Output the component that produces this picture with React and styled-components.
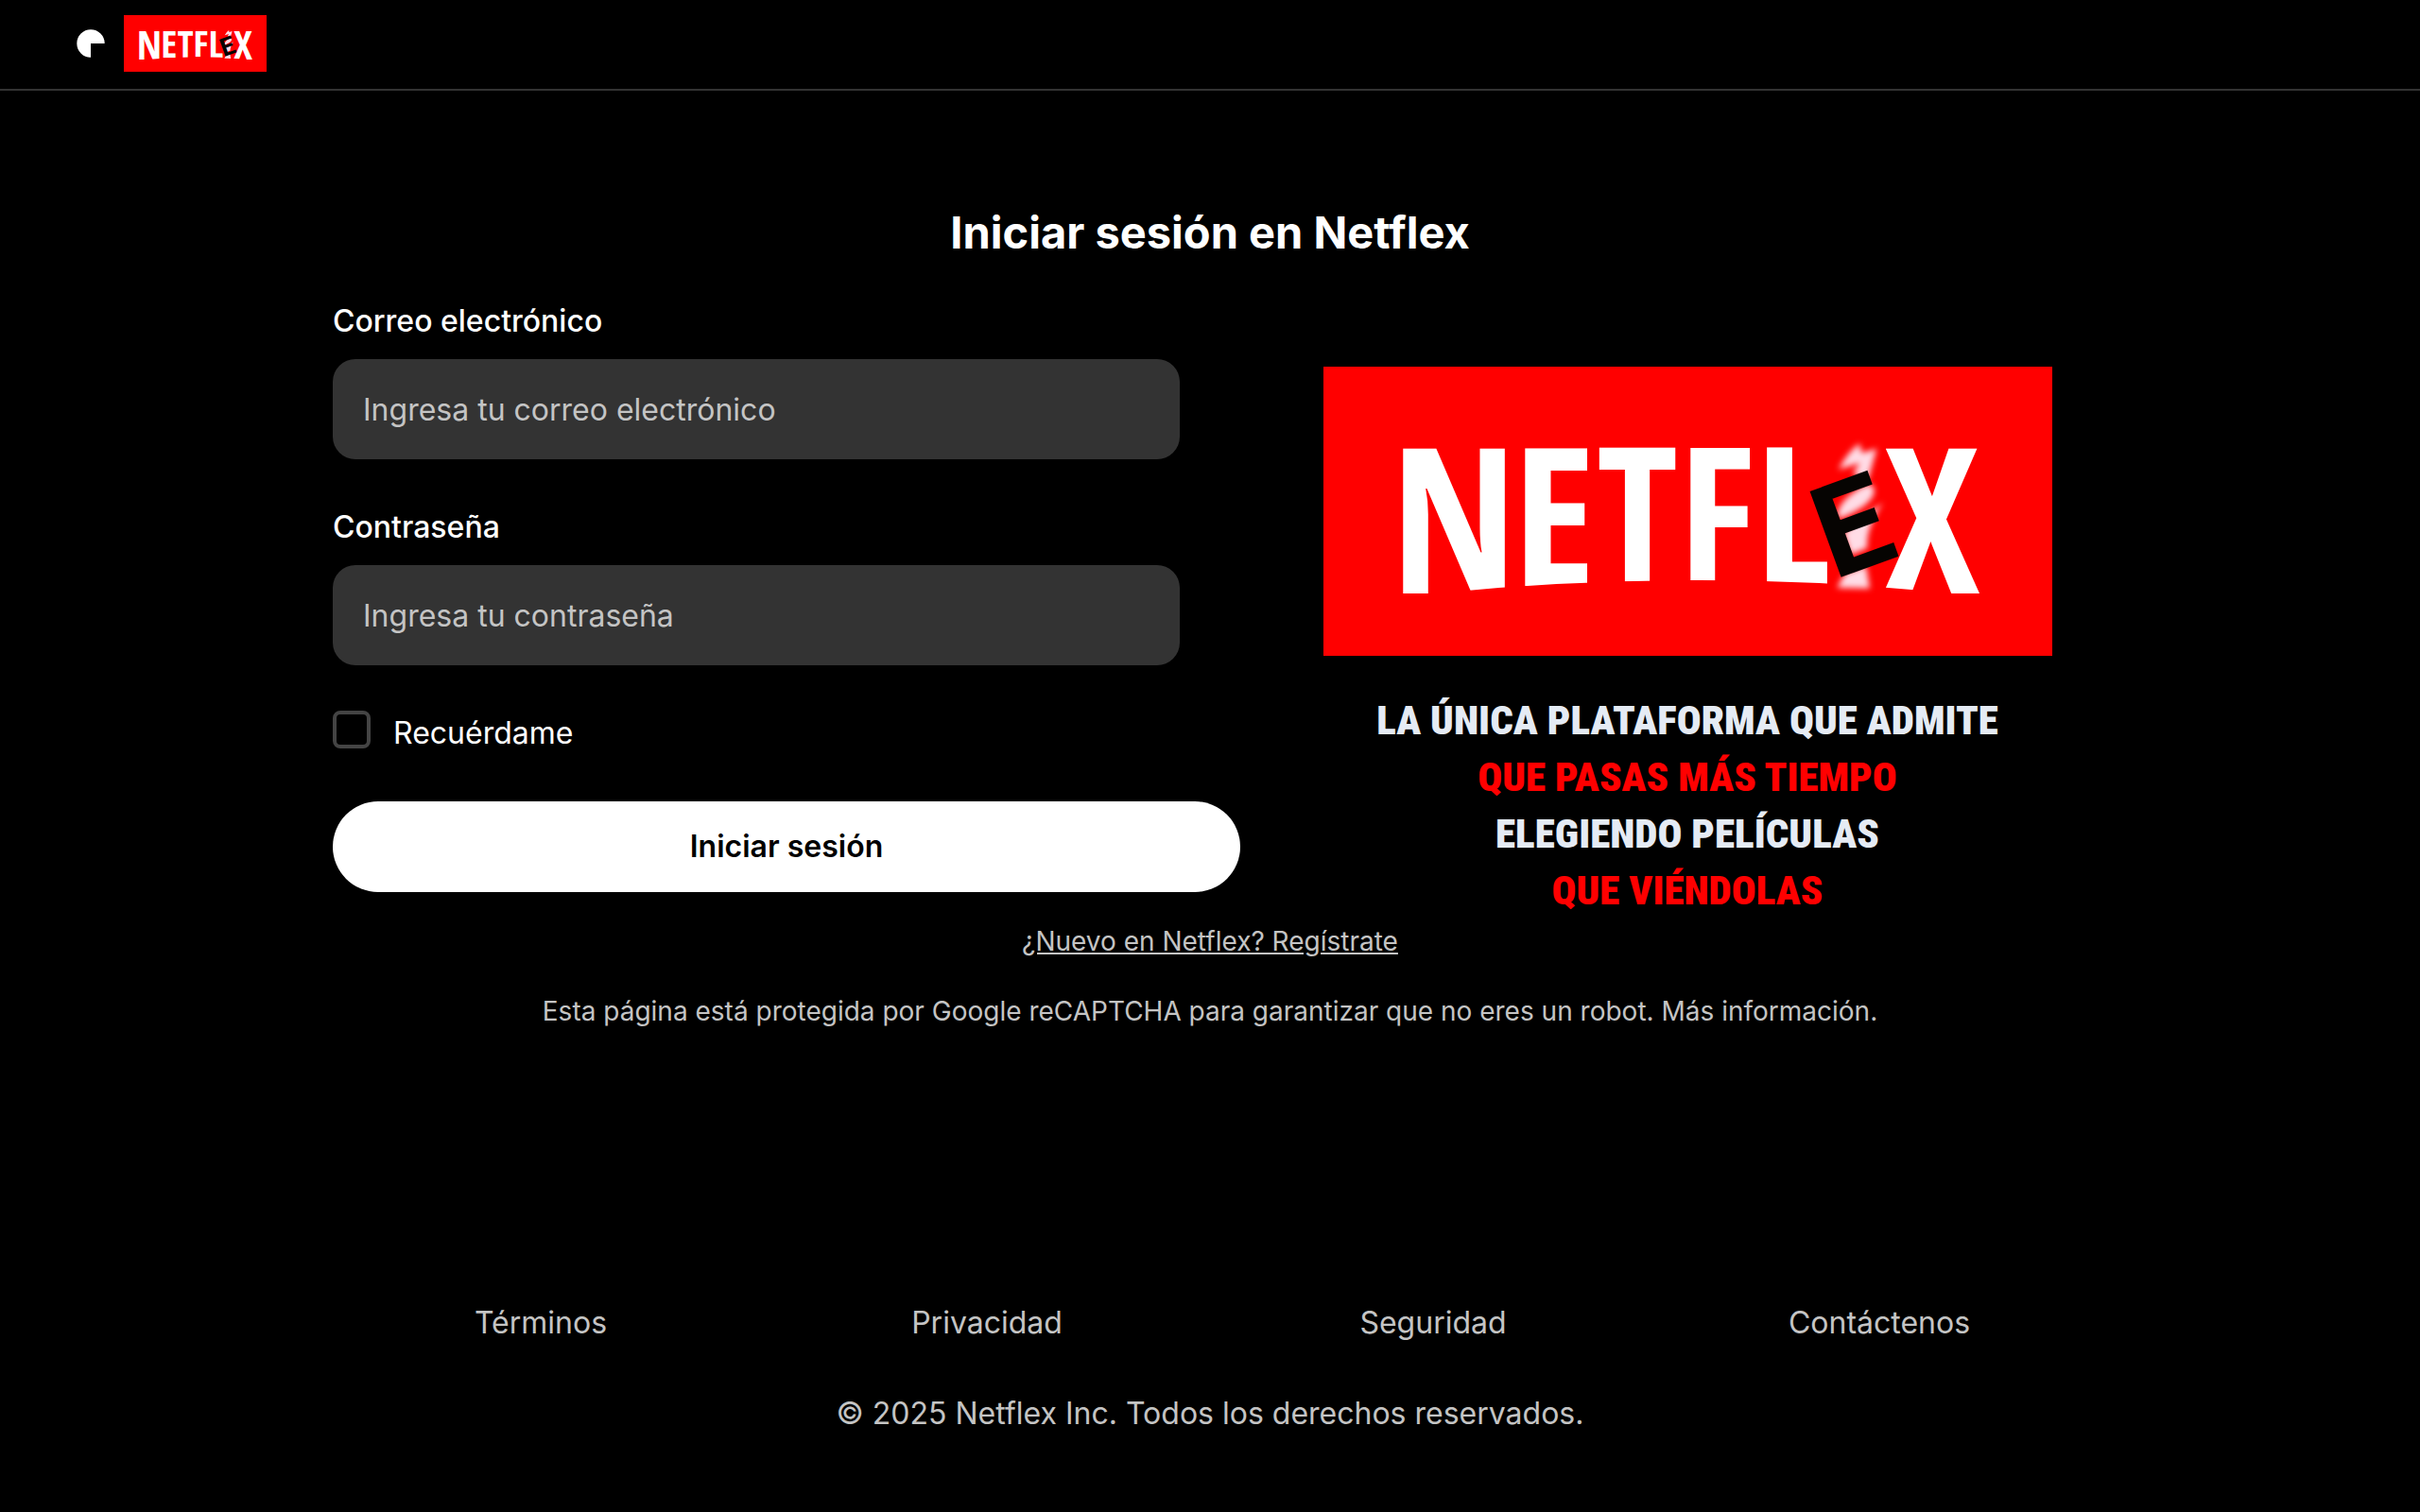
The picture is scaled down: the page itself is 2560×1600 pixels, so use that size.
import React, { useId } from "react";
import styled, { createGlobalStyle } from "styled-components";

const GlobalStyle = createGlobalStyle`
  *, *::before, *::after { box-sizing: border-box; }
  body {
    margin: 0;
    background: #000;
    color: #fff;
    font-family: Inter, "Open Sans", sans-serif;
    font-size: 32px;
    line-height: 48px;
  }
`;

const Page = styled.div`
  min-height: 100vh;
  display: flex;
  flex-direction: column;
`;

const Header = styled.header`
  display: flex;
  align-items: center;
  gap: 20px;
  padding: 16px 81px 18px;
  border-bottom: 2px solid #333;
`;

const HomeLink = styled.a`
  display: flex;
  width: ${(p) => p.$width}px;
`;

const Drawing = styled.svg`
  display: block;
  width: 100%;
  height: auto;
`;

const Main = styled.main`
  flex: 1;
  width: 100%;
  max-width: 1856px;
  margin: 0 auto;
  padding-top: 120px;
  display: flex;
  flex-direction: column;
  align-items: center;
`;

const Title = styled.h1`
  margin: 0 0 40px;
  font-size: 47px;
  line-height: 60px;
  font-weight: 700;
`;

const Columns = styled.div`
  width: 100%;
  display: grid;
  grid-template-columns: minmax(0, 960px) minmax(0, 1fr);
  column-gap: 50px;
`;

const Form = styled.form`
  display: flex;
  flex-direction: column;
  gap: 48px;
`;

const Field = styled.div`
  display: flex;
  flex-direction: column;
  gap: 16px;
  padding-right: 64px;
`;

const FieldLabel = styled.label`
  font-weight: 500;
`;

const TextInput = styled.input`
  width: 100%;
  height: 106px;
  padding: 2px 32px 0;
  border: 0;
  border-radius: 24px;
  background: #333;
  color: #fff;
  font: inherit;
  &::placeholder {
    color: #c4c4c4;
    opacity: 1;
  }
`;

const RememberRow = styled.div`
  display: flex;
  align-items: flex-start;
  gap: 24px;
`;

const Checkbox = styled.input`
  appearance: none;
  width: 40px;
  height: 40px;
  margin: 0;
  border: 4px solid #444;
  border-radius: 8px;
  background: transparent;
  &:checked {
    background: #fff;
  }
`;

const SubmitButton = styled.button`
  height: 96px;
  border: 0;
  border-radius: 48px;
  background: #fff;
  color: #000;
  font: inherit;
  font-weight: 600;
`;

const Promo = styled.section`
  padding-top: 72px;
  display: flex;
  flex-direction: column;
  align-items: center;
  gap: 38px;
`;

const PromoBanner = styled.div`
  width: 100%;
  max-width: 771px;
`;

const Slogan = styled.p`
  margin: 0;
  text-align: center;
  font-family: "Roboto Condensed", "Open Sans Condensed", Roboto, sans-serif;
  font-size: 43px;
  line-height: 60px;
  font-weight: 900;
`;

const SloganLine = styled.span`
  display: block;
  color: ${(p) => (p.$accent ? "#f00" : "#e5ebf4")};
`;

const SmallPrint = styled.div`
  margin-top: 4px;
  display: flex;
  flex-direction: column;
  align-items: center;
  gap: 34px;
  color: #c4c4c4;
  font-size: 28px;
  line-height: 40px;
`;

const SignUpLink = styled.a`
  color: inherit;
`;

const Notice = styled.p`
  margin: 0;
`;

const Footer = styled.footer`
  width: 100%;
  max-width: 1888px;
  margin: 0 auto;
  padding-bottom: 80px;
  display: flex;
  flex-direction: column;
  gap: 48px;
  color: #c4c4c4;
  text-align: center;
`;

const FooterNav = styled.nav`
  display: grid;
  grid-template-columns: repeat(4, 1fr);
`;

const FooterLink = styled.a`
  color: inherit;
  text-decoration: none;
`;

const Copyright = styled.p`
  margin: 0;
`;

const LogoLetter = styled.text`
  fill: #fff;
  font-family: "Open Sans Condensed", "Roboto Condensed", sans-serif;
  font-weight: 700;
  text-anchor: middle;
`;

const StampedLetter = styled.text`
  fill: #060402;
  font-family: Roboto, sans-serif;
  font-size: 136px;
  font-weight: 700;
`;

/* Centre, baseline and size of each white letter; sizes grow towards both ends to form the arch. */
const LETTERS = [
  { char: "N", x: 138, y: 240, size: 215 },
  { char: "E", x: 244, y: 232, size: 204 },
  { char: "T", x: 332, y: 228, size: 198 },
  { char: "F", x: 416, y: 226, size: 196 },
  { char: "L", x: 497, y: 230, size: 201 },
  { char: "X", x: 643, y: 240, size: 215 },
];

function NetflexLogo() {
  const blurId = useId();
  return (
    <Drawing viewBox="0 0 771 306" role="img" aria-label="Netflex">
      <filter id={blurId} x="-20%" y="-20%" width="140%" height="140%">
        <feGaussianBlur stdDeviation="9" />
      </filter>
      <rect width="771" height="306" fill="#f00" />
      {LETTERS.map((l) => (
        <LogoLetter key={l.char} x={l.x} y={l.y} fontSize={l.size}>
          {l.char}
        </LogoLetter>
      ))}
      <path d="M80 244 Q240 226 400 226 Q550 226 700 244 V270 H80 Z" fill="#f00" />
      <g transform="translate(460 52) scale(0.3333)" fill="#ffdce6" filter={`url(#${blurId})`}>
        <path d="M255 170 Q285 112 322 88 L328 118 L376 104 L348 205 L300 185 L322 150 Z" />
        <path d="M252 325 Q245 280 318 232 Q368 200 368 242 Q360 285 262 325 Z" />
        <path d="M270 370 L395 275 Q340 360 346 420 L292 442 Z" />
        <path d="M250 546 L275 500 L342 475 L354 548 Z" />
      </g>
      <StampedLetter transform="translate(547 223) rotate(-20)" x="-8" y="0">
        E
      </StampedLetter>
    </Drawing>
  );
}

function PieMark() {
  return (
    <Drawing viewBox="0 0 30 30" aria-hidden="true">
      <path d="M15 15 H29.7 A14.7 14.7 0 1 0 15 29.7 Z" fill="#fff" />
    </Drawing>
  );
}

const SLOGAN = [
  "LA ÚNICA PLATAFORMA QUE ADMITE",
  "QUE PASAS MÁS TIEMPO",
  "ELEGIENDO PELÍCULAS",
  "QUE VIÉNDOLAS",
];

const FOOTER_LINKS = ["Términos", "Privacidad", "Seguridad", "Contáctenos"];

export default function App() {
  return (
    <Page>
      <GlobalStyle />
      <Header>
        <HomeLink href="#" aria-label="Inicio" $width={30}>
          <PieMark />
        </HomeLink>
        <HomeLink href="#" $width={151}>
          <NetflexLogo />
        </HomeLink>
      </Header>

      <Main>
        <Title>Iniciar sesión en Netflex</Title>
        <Columns>
          <Form onSubmit={(e) => e.preventDefault()}>
            <Field>
              <FieldLabel htmlFor="email">Correo electrónico</FieldLabel>
              <TextInput id="email" type="email" placeholder="Ingresa tu correo electrónico" />
            </Field>
            <Field>
              <FieldLabel htmlFor="password">Contraseña</FieldLabel>
              <TextInput id="password" type="password" placeholder="Ingresa tu contraseña" />
            </Field>
            <RememberRow>
              <Checkbox id="remember" type="checkbox" />
              <label htmlFor="remember">Recuérdame</label>
            </RememberRow>
            <SubmitButton type="submit">Iniciar sesión</SubmitButton>
          </Form>
          <Promo>
            <PromoBanner>
              <NetflexLogo />
            </PromoBanner>
            <Slogan>
              {SLOGAN.map((line, i) => (
                <SloganLine key={line} $accent={i % 2 === 1}>
                  {line}
                </SloganLine>
              ))}
            </Slogan>
          </Promo>
        </Columns>
        <SmallPrint>
          <SignUpLink href="#">¿Nuevo en Netflex? Regístrate</SignUpLink>
          <Notice>
            Esta página está protegida por Google reCAPTCHA para garantizar que no eres un robot. Más información.
          </Notice>
        </SmallPrint>
      </Main>

      <Footer>
        <FooterNav>
          {FOOTER_LINKS.map((name) => (
            <FooterLink key={name} href="#">
              {name}
            </FooterLink>
          ))}
        </FooterNav>
        <Copyright>© 2025 Netflex Inc. Todos los derechos reservados.</Copyright>
      </Footer>
    </Page>
  );
}
